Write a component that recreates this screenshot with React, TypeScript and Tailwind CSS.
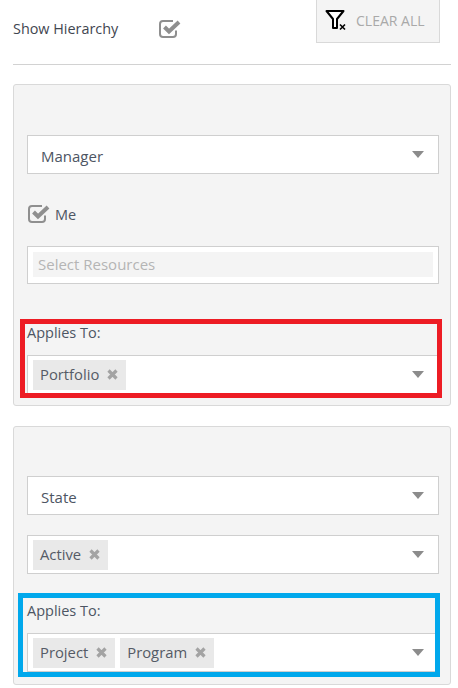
import React from 'react';

const font = { fontFamily: '"Open Sans", "Noto Sans", sans-serif' };

const CheckIcon = () => (
  <svg width="22" height="20" viewBox="0 0 22 20" fill="none" className="shrink-0">
    <path d="M17 11.5v3.5a3 3 0 0 1-3 3H4a3 3 0 0 1-3-3V5a3 3 0 0 1 3-3h10" stroke="#8f8f8f" strokeWidth="2" />
    <path d="M5.5 8 10 12.5 20 3" stroke="#8f8f8f" strokeWidth="4" />
  </svg>
);

const Caret = () => (
  <svg width="12" height="7" viewBox="0 0 12 7" className="shrink-0 -mt-[1px]">
    <path d="M0 0h12L6 7z" fill="#8c8c8c" />
  </svg>
);

const Tag = ({ label }: { label: string }) => (
  <span className="flex h-[30px] items-center gap-[8px] bg-[#e9e9e9] pl-[7px] pr-[8px] text-[14.8px] text-[#555b66]">
    {label}
    <svg width="11" height="11" viewBox="0 0 11 11" className="shrink-0">
      <path d="M1.5 1.5l8 8M9.5 1.5l-8 8" stroke="#a3a3a3" strokeWidth="3.2" />
    </svg>
  </span>
);

const Dropdown = ({ label }: { label: string }) => (
  <div className="flex h-[39px] items-center justify-between border border-[#cfcfcf] bg-white pl-[13px] pr-[14px] text-[15px] text-[#4d5563]">
    <span className="pt-[3px]">{label}</span>
    <Caret />
  </div>
);

const TagSelect = ({ tags }: { tags: string[] }) => (
  <div className="flex h-[39px] items-center justify-between border border-[#cfcfcf] bg-white pl-[5px] pr-[14px]">
    <div className="flex gap-[5px]">
      {tags.map((t) => (
        <Tag key={t} label={t} />
      ))}
    </div>
    <Caret />
  </div>
);

const AppliesTo = ({ tags, frame }: { tags: string[]; frame: string }) => (
  <div className="relative">
    <div className="text-[14.5px] leading-[20px] text-[#4d5563]">Applies To:</div>
    <div className="mt-[12px]">
      <TagSelect tags={tags} />
    </div>
    <div className={frame} />
  </div>
);

export default function App() {
  return (
    <div className="h-[688px] w-[458px] overflow-hidden bg-white pl-[13px] pr-[7px]" style={font}>
      <div className="relative h-[65px] border-b border-[#d2d2d2]">
        <div className="flex items-center pt-[18px]">
          <span className="w-[146px] pt-[1px] text-[14.4px] leading-[20px] text-[#3f4650]">Show Hierarchy</span>
          <CheckIcon />
        </div>
        <button className="absolute right-[11px] top-0 flex h-[43px] w-[124px] items-center gap-[9px] border border-t-0 border-[#d9d9d9] bg-[#f4f4f4] pb-[2px] pl-[8px] text-[14px] text-[#a9a9a9]">
          <svg width="22" height="22" viewBox="0 0 22 22" fill="none" className="shrink-0">
            <path d="M1.5 2h17l-6.5 8v9H8v-9z" stroke="#000" strokeWidth="2" strokeLinejoin="round" fill="#fff" />
            <path d="M15 15.5l5 5M20 15.5l-5 5" stroke="#000" strokeWidth="1.6" />
          </svg>
          CLEAR ALL
        </button>
      </div>

      <div className="mt-[19px] h-[322px] rounded-[3px] border border-[#d9d9d9] bg-[#f4f4f4] pl-[13px] pr-[11px] pt-[50px]">
        <Dropdown label="Manager" />
        <div className="mt-[30px] flex h-[20px] items-center gap-[5px] pl-[1px] text-[14.5px] text-[#4d5563]">
          <CheckIcon />
          <span className="pt-[1px]">Me</span>
        </div>
        <div className="mt-[22px] h-[38px] border border-[#cfcfcf] bg-white p-[5px]">
          <div className="flex h-[25px] items-center bg-[#f4f4f4] pl-[5px] text-[15px] text-[#b5b5b5]">Select Resources</div>
        </div>
        <div className="mt-[39px]">
          <AppliesTo tags={['Portfolio']} frame="absolute -left-[7px] -right-[3px] -top-[4px] bottom-[-4px] border-[5px] border-[#ed1c24]" />
        </div>
      </div>

      <div className="mt-[20px] h-[259px] rounded-[3px] border border-[#d9d9d9] bg-[#f4f4f4] pl-[13px] pr-[11px] pt-[49px]">
        <Dropdown label="State" />
        <div className="mt-[20px]">
          <TagSelect tags={['Active']} />
        </div>
        <div className="mt-[27px]">
          <AppliesTo tags={['Project', 'Program']} frame="absolute -left-[9px] -right-[1px] -top-[8px] bottom-[-5px] border-[5px] border-[#00a8ec]" />
        </div>
      </div>
    </div>
  );
}
